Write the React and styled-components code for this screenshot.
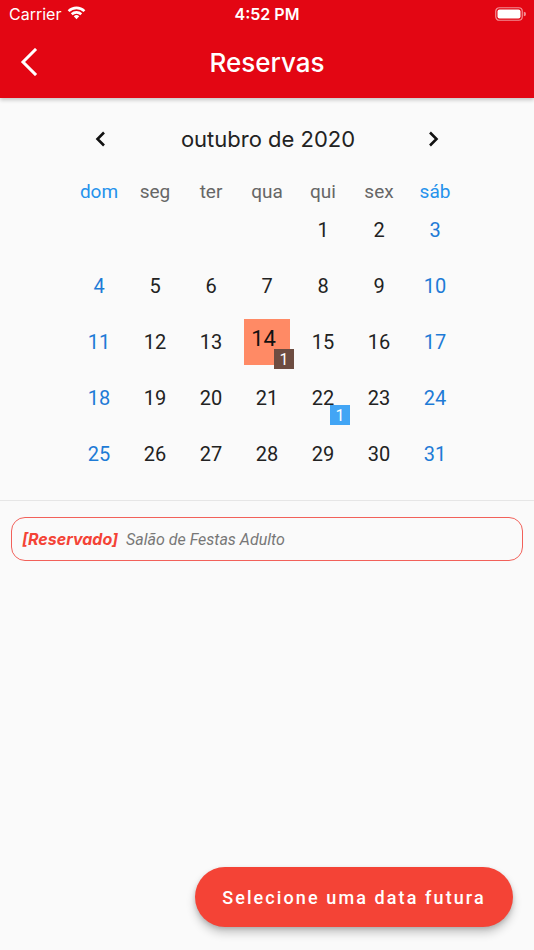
import React from "react";
import styled, { createGlobalStyle } from "styled-components";

const GlobalStyle = createGlobalStyle`
  html, body {
    margin: 0;
    padding: 0;
    background: #fafafa;
  }
  body {
    font-family: "Inter", "Roboto", "Noto Sans", sans-serif;
  }
`;

const weekdays = ["dom", "seg", "ter", "qua", "qui", "sex", "sáb"];

// outubro de 2020 starts on a Thursday
const cells = [];
for (let i = 0; i < 4; i++) cells.push(null);
for (let d = 1; d <= 31; d++) cells.push(d);

const badges = { 14: "brown", 22: "blue" };

export default function App() {
  return (
    <Page>
      <GlobalStyle />
      <Header>
        <StatusBar>
          <Carrier>
            Carrier
            <svg width="21" height="15" viewBox="0 0 20 14">
              <path
                d="M10 13.5 L12.6 10.6 A3.8 3.8 0 0 0 7.4 10.6 Z"
                fill="#fff"
              />
              <path
                d="M4.6 7.8 L6.3 9.6 A5.4 5.4 0 0 1 13.7 9.6 L15.4 7.8 A7.9 7.9 0 0 0 4.6 7.8 Z"
                fill="#fff"
              />
              <path
                d="M1.6 4.8 L3.3 6.6 A9.6 9.6 0 0 1 16.7 6.6 L18.4 4.8 A12 12 0 0 0 1.6 4.8 Z"
                fill="#fff"
              />
            </svg>
          </Carrier>
          <Time>4:52 PM</Time>
          <Battery>
            <svg width="31" height="14" viewBox="0 0 31 14">
              <rect
                x="0.75"
                y="0.75"
                width="26.5"
                height="12.5"
                rx="3.5"
                fill="none"
                stroke="rgba(255,255,255,0.55)"
                strokeWidth="1.2"
              />
              <rect x="2.5" y="2.5" width="23" height="9" rx="2" fill="#fff" />
              <path d="M28.8 4.8 a2 2 0 0 1 0 4.4 Z" fill="rgba(255,255,255,0.55)" />
            </svg>
          </Battery>
        </StatusBar>
        <AppBar>
          <BackButton>
            <svg width="18" height="28" viewBox="0 0 18 28">
              <path
                d="M15 2 L3 14 L15 26"
                fill="none"
                stroke="#fff"
                strokeWidth="3"
                strokeLinecap="square"
              />
            </svg>
          </BackButton>
          <Title>Reservas</Title>
        </AppBar>
      </Header>

      <Calendar>
        <MonthRow>
          <Arrow>
            <svg width="14" height="18" viewBox="0 0 14 18">
              <path d="M10 2.5 L3.5 9 L10 15.5" fill="none" stroke="#111" strokeWidth="2.6" />
            </svg>
          </Arrow>
          <MonthTitle>outubro de 2020</MonthTitle>
          <Arrow>
            <svg width="14" height="18" viewBox="0 0 14 18">
              <path d="M4 2.5 L10.5 9 L4 15.5" fill="none" stroke="#111" strokeWidth="2.6" />
            </svg>
          </Arrow>
        </MonthRow>
        <WeekRow>
          {weekdays.map((w, i) => (
            <WeekDay key={w} $weekend={i === 0 || i === 6}>
              {w}
            </WeekDay>
          ))}
        </WeekRow>
        <DaysGrid>
          {cells.map((d, i) => (
            <DayCell key={i}>
              {d && d === 14 ? (
                <Selected>{d}</Selected>
              ) : d ? (
                <DayNum $weekend={i % 7 === 0 || i % 7 === 6}>{d}</DayNum>
              ) : null}
              {d && badges[d] ? <Badge $kind={badges[d]}>1</Badge> : null}
            </DayCell>
          ))}
        </DaysGrid>
      </Calendar>

      <Divider />

      <EventCard>
        <Status>[Reservado]</Status>
        <Place>Salão de Festas Adulto</Place>
      </EventCard>

      <Fab>Selecione uma data futura</Fab>
    </Page>
  );
}

const Page = styled.div`
  width: 534px;
  height: 950px;
  display: flex;
  flex-direction: column;
  background: #fafafa;
  overflow: hidden;
`;

const Header = styled.div`
  background: #e30613;
  color: #fff;
  box-shadow: 0 2px 4px rgba(0, 0, 0, 0.22);
  position: relative;
  z-index: 1;
`;

const StatusBar = styled.div`
  height: 28px;
  display: grid;
  grid-template-columns: 1fr auto 1fr;
  align-items: center;
  padding: 0 9px;
  font-size: 16px;
`;

const Carrier = styled.div`
  display: flex;
  align-items: center;
  gap: 5px;
  font-weight: 400;
  svg {
    margin-top: -4px;
  }
`;

const Time = styled.div`
  font-weight: 600;
`;

const Battery = styled.div`
  display: flex;
  justify-content: flex-end;
  svg {
    margin-right: -1px;
  }
`;

const AppBar = styled.div`
  height: 70px;
  display: flex;
  align-items: center;
  justify-content: center;
  position: relative;
`;

const BackButton = styled.div`
  position: absolute;
  left: 20px;
  top: 20px;
  display: flex;
`;

const Title = styled.div`
  font-size: 26px;
  font-weight: 500;
  margin-top: -1px;
`;

const Calendar = styled.div`
  padding: 17px 0 0;
  display: flex;
  flex-direction: column;
  align-items: center;
  font-family: "Roboto", "Inter", sans-serif;
`;

const MonthRow = styled.div`
  width: 362px;
  height: 48px;
  display: flex;
  align-items: center;
  justify-content: space-between;
`;

const Arrow = styled.div`
  width: 30px;
  display: flex;
  justify-content: center;
`;

const MonthTitle = styled.div`
  font-family: "Inter", "Roboto", sans-serif;
  font-size: 22px;
  color: #222;
  margin-left: 2px;
`;

const WeekRow = styled.div`
  width: 392px;
  margin-top: 17px;
  height: 22px;
  display: grid;
  grid-template-columns: repeat(7, 56px);
  align-items: center;
`;

const WeekDay = styled.div`
  text-align: center;
  font-size: 19px;
  color: ${(p) => (p.$weekend ? "#2592ec" : "#666")};
`;

const DaysGrid = styled.div`
  width: 392px;
  display: grid;
  grid-template-columns: repeat(7, 56px);
  grid-auto-rows: 56px;
`;

const DayCell = styled.div`
  position: relative;
  display: flex;
  align-items: center;
  justify-content: center;
`;

const DayNum = styled.div`
  font-size: 20px;
  color: ${(p) => (p.$weekend ? "#1e7bd6" : "#222")};
`;

const Selected = styled.div`
  width: 46px;
  height: 46px;
  background: #ff8a65;
  color: #111;
  font-size: 22px;
  display: flex;
  align-items: center;
  justify-content: center;
  margin-top: -1px;
  padding-bottom: 6px;
  padding-right: 7px;
  box-sizing: border-box;
`;

const Badge = styled.div`
  position: absolute;
  right: 1px;
  bottom: 1px;
  width: 20px;
  height: 20px;
  background: ${(p) => (p.$kind === "blue" ? "#42a5f5" : "#6d4c41")};
  color: #fff;
  font-size: 16px;
  display: flex;
  align-items: center;
  justify-content: center;
`;

const Divider = styled.div`
  margin-top: 18px;
  height: 1px;
  background: #e6e6e6;
`;

const EventCard = styled.div`
  margin: 16px 11px 0;
  height: 44px;
  border: 1.5px solid #f2615a;
  border-radius: 14px;
  display: flex;
  align-items: center;
  gap: 8px;
  padding: 0 10px;
  box-sizing: border-box;
  font-size: 16px;
  font-style: italic;
`;

const Status = styled.span`
  color: #f44336;
  font-weight: 700;
`;

const Place = styled.span`
  font-family: "Roboto", "Inter", sans-serif;
  color: #777;
`;

const Fab = styled.div`
  margin-top: auto;
  margin-bottom: 23px;
  margin-right: 21px;
  align-self: flex-end;
  width: 318px;
  height: 60px;
  border-radius: 30px;
  background: #f44336;
  color: #fff;
  display: flex;
  align-items: center;
  justify-content: center;
  font-family: "Roboto", "Inter", sans-serif;
  font-size: 18px;
  font-weight: 500;
  letter-spacing: 2.1px;
  box-shadow: 0 6px 10px rgba(0, 0, 0, 0.2), 0 2px 4px rgba(0, 0, 0, 0.15);
`;
